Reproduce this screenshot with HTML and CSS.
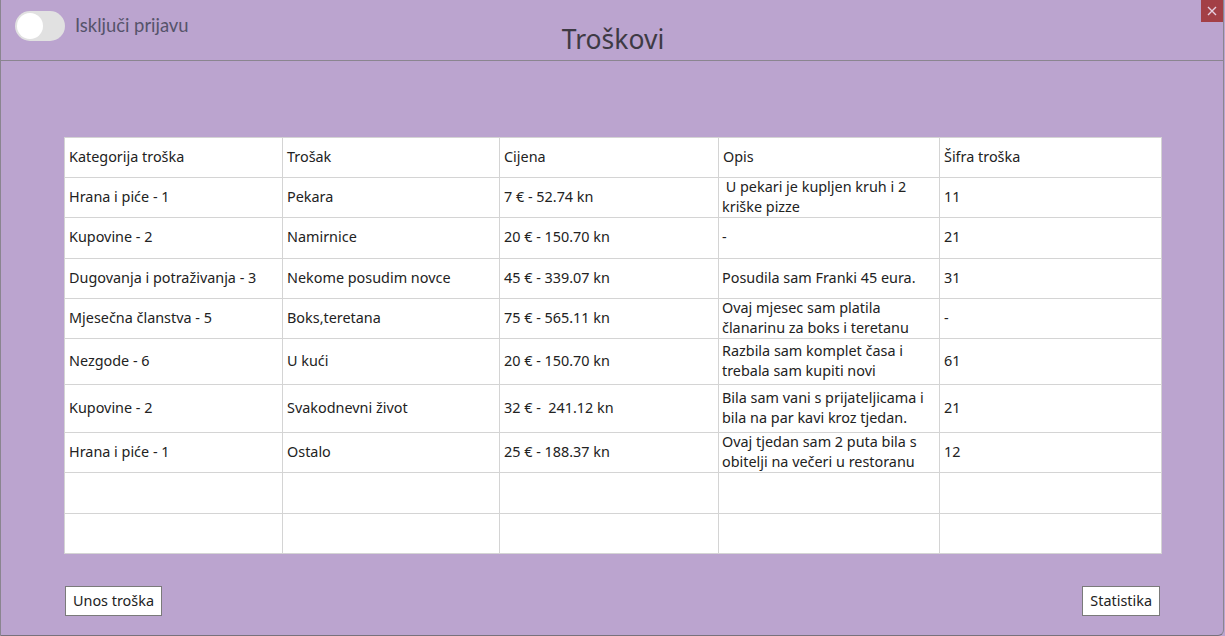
FILE: index.html
```html
<!DOCTYPE html>
<html lang="hr">
<head>
<meta charset="utf-8">
<title>Troškovi</title>
<link rel="stylesheet" href="styles.css">
</head>
<body>
<div class="window">
  <header class="header">
    <div class="toggle-wrap">
      <span class="toggle"><span class="knob"></span></span>
      <span class="toggle-label">Isključi prijavu</span>
    </div>
    <h1 class="title">Troškovi</h1>
    <div class="close-cell">
      <button class="close" aria-label="Zatvori">
        <svg width="10" height="10" viewBox="0 0 10 10"><path d="M1 1 L9 9 M9 1 L1 9" stroke="#e6cfe0" stroke-width="1.4" fill="none"/></svg>
      </button>
    </div>
  </header>
  <main class="main">
    <div class="grid">
      <div class="c">Kategorija troška</div><div class="c">Trošak</div><div class="c">Cijena</div><div class="c">Opis</div><div class="c">Šifra troška</div>

      <div class="c">Hrana i piće - 1</div><div class="c">Pekara</div><div class="c">7 € - 52.74 kn</div><div class="c o"><span>&nbsp;U pekari je kupljen kruh i 2<br>kriške pizze</span></div><div class="c">11</div>

      <div class="c">Kupovine - 2</div><div class="c">Namirnice</div><div class="c">20 € - 150.70 kn</div><div class="c o">-</div><div class="c">21</div>

      <div class="c">Dugovanja i potraživanja - 3</div><div class="c">Nekome posudim novce</div><div class="c">45 € - 339.07 kn</div><div class="c o">Posudila sam Franki 45 eura.</div><div class="c">31</div>

      <div class="c">Mjesečna članstva - 5</div><div class="c">Boks,teretana</div><div class="c">75 € - 565.11 kn</div><div class="c o"><span>Ovaj mjesec sam platila<br>članarinu za boks i teretanu</span></div><div class="c">-</div>

      <div class="c">Nezgode - 6</div><div class="c">U kući</div><div class="c">20 € - 150.70 kn</div><div class="c o"><span>Razbila sam komplet časa i<br>trebala sam kupiti novi</span></div><div class="c">61</div>

      <div class="c">Kupovine - 2</div><div class="c">Svakodnevni život</div><div class="c">32 € -&nbsp; 241.12 kn</div><div class="c o"><span>Bila sam vani s prijateljicama i<br>bila na par kavi kroz tjedan.</span></div><div class="c">21</div>

      <div class="c">Hrana i piće - 1</div><div class="c">Ostalo</div><div class="c">25 € - 188.37 kn</div><div class="c o"><span>Ovaj tjedan sam 2 puta bila s<br>obitelji na večeri u restoranu</span></div><div class="c">12</div>

      <div class="c"></div><div class="c"></div><div class="c"></div><div class="c"></div><div class="c"></div>
      <div class="c"></div><div class="c"></div><div class="c"></div><div class="c"></div><div class="c"></div>
    </div>
    <div class="actions">
      <button class="btn">Unos troška</button>
      <button class="btn">Statistika</button>
    </div>
  </main>
</div>
</body>
</html>
```

FILE: styles.css
```css
html, body {
  margin: 0;
  padding: 0;
}
body {
  width: 1225px;
  height: 636px;
  overflow: hidden;
  background: #bba4cf;
  font-family: "Noto Sans", "Open Sans", sans-serif;
}
.window {
  box-sizing: border-box;
  width: 1224px;
  height: 636px;
  background: #bba4cf;
  border-left: 1px solid #8a8590;
  border-right: 1px solid #8a8590;
  border-bottom: 1px solid #77727c;
  border-bottom-right-radius: 6px;
  display: flex;
  flex-direction: column;
}
.header {
  box-sizing: border-box;
  height: 61px;
  border-bottom: 1px solid #8a8590;
  display: grid;
  grid-template-columns: 1fr auto 1fr;
}
.toggle-wrap {
  display: flex;
  align-items: center;
  gap: 10px;
  padding: 11px 0 0 14px;
  align-self: start;
}
.toggle {
  box-sizing: border-box;
  width: 50px;
  height: 30px;
  border-radius: 15px;
  background: #e1e1e1;
  display: flex;
  align-items: center;
  padding-left: 2px;
}
.knob {
  width: 26px;
  height: 26px;
  border-radius: 50%;
  background: #ffffff;
}
.toggle-label {
  font-family: "Lato", "Noto Sans", sans-serif;
  font-size: 18.4px;
  color: #55536a;
  margin-top: -3px;
}
.title {
  margin: 0;
  align-self: end;
  font-family: "Noto Sans", sans-serif;
  font-weight: 400;
  font-size: 26.5px;
  line-height: 36px;
  color: #3e3a44;
  padding-bottom: 3px;
  padding-left: 2px;
}
.close-cell {
  justify-self: end;
  align-self: start;
}
.close {
  width: 22px;
  height: 22px;
  border: 0;
  padding: 0;
  margin: 0;
  background: #a33f46;
  display: flex;
  align-items: center;
  justify-content: center;
}
.main {
  flex: 1;
  padding: 76px 61px 0 63px;
  display: flex;
  flex-direction: column;
}
.grid {
  display: grid;
  grid-template-columns: 217px 216px 218px 220px 221px;
  grid-template-rows: 39px 39px 40px 39px 39px 45px 47px 39px 40px 39px;
  gap: 1px;
  padding: 1px;
  background: #d4d4d4;
  width: max-content;
}
.c {
  box-sizing: border-box;
  background: #ffffff;
  display: flex;
  align-items: center;
  padding: 0 0 2px 4px;
  overflow: hidden;
  font-size: 14.4px;
  line-height: 20px;
  color: #222222;
  white-space: nowrap;
}
.c.o {
  padding-left: 3px;
}
.actions {
  display: flex;
  justify-content: space-between;
  margin-top: 32px;
  padding-left: 1px;
  padding-right: 2px;
}
.btn {
  box-sizing: border-box;
  height: 30px;
  padding: 0 7px 1px;
  background: #ffffff;
  border: 1px solid #7a7a7a;
  border-radius: 0;
  font-family: "Noto Sans", sans-serif;
  font-size: 14.4px;
  color: #222222;
}
```
